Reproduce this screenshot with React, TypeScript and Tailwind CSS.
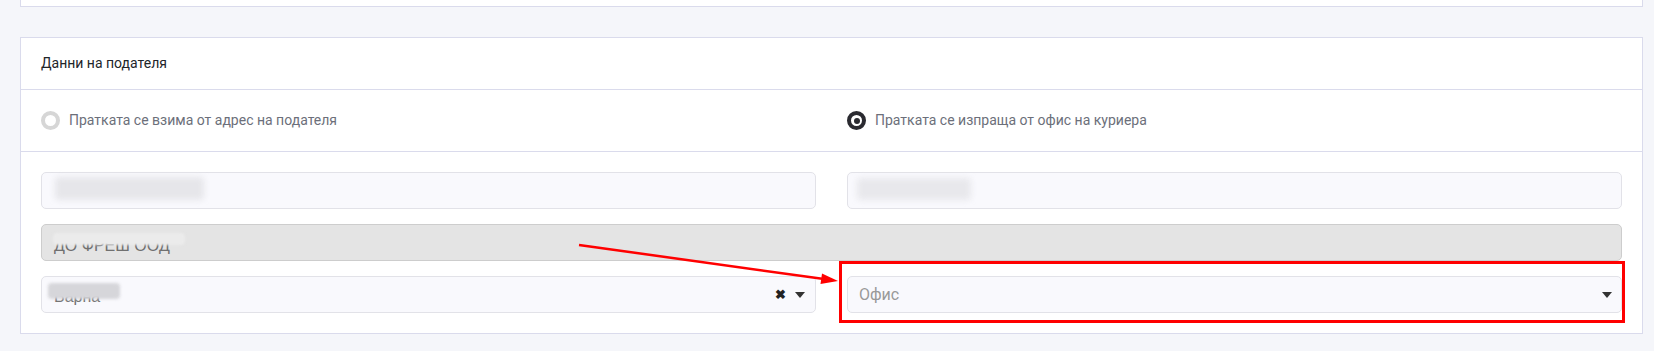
import React from "react";

function Smudge({ className }: { className: string }) {
  return <div className={`absolute rounded-sm ${className}`} />;
}

function Radio({ checked }: { checked?: boolean }) {
  if (checked) {
    return (
      <span className="flex h-[19px] w-[19px] items-center justify-center rounded-full border-[4px] border-[#2a2a30] bg-white">
        <span className="h-[6px] w-[6px] rounded-full bg-[#2a2a30]" />
      </span>
    );
  }
  return <span className="h-[19px] w-[19px] rounded-full border-[4px] border-[#d6d6d6] bg-white" />;
}

function Caret() {
  return (
    <svg width="10" height="6" viewBox="0 0 10 6">
      <path d="M0 0 L10 0 L5 6 Z" fill="#333" />
    </svg>
  );
}

export default function App() {
  return (
    <div
      className="relative h-[351px] w-full overflow-hidden bg-[#f5f6fa] pl-[20px] pr-[11px]"
      style={{ fontFamily: "Roboto, 'Liberation Sans', sans-serif" }}
    >
      {/* previous card, cut off at the top */}
      <div className="h-[7px] border-x border-b border-[#dadbec] bg-white" />

      {/* Данни на подателя */}
      <div className="mt-[30px] border border-[#dadbec] bg-white">
        <div className="flex h-[52px] items-center border-b border-[#dadbec] px-[20px] text-[14px] text-[#212529]">
          Данни на подателя
        </div>

        <div className="grid h-[62px] grid-cols-2 items-center gap-[31px] border-b border-[#dadbec] px-[20px] text-[14px] text-[#6c6f7a]">
          <label className="flex items-center gap-[9px]">
            <Radio />
            <span>Пратката се взима от адрес на подателя</span>
          </label>
          <label className="flex items-center gap-[9px]">
            <Radio checked />
            <span>Пратката се изпраща от офис на куриера</span>
          </label>
        </div>

        <div className="flex flex-col gap-[15px] px-[20px] py-[20px]">
          <div className="grid grid-cols-2 gap-[31px]">
            <div className="relative h-[37px] rounded-[5px] border border-[#e2e2e8] bg-[#f9f9fd]">
              <Smudge className="left-[13px] top-[4px] h-[23px] w-[149px] bg-[#e6e6ea] blur-[3px]" />
            </div>
            <div className="relative h-[37px] rounded-[5px] border border-[#e2e2e8] bg-[#f9f9fd]">
              <Smudge className="left-[9px] top-[5px] h-[22px] w-[114px] bg-[#e8e8ec] blur-[3px]" />
            </div>
          </div>

          <div className="relative flex h-[37px] items-center overflow-hidden rounded-[5px] border border-[#cdcdcd] bg-[#e4e4e4] pl-[12px] pt-[6px] font-['Liberation_Sans',sans-serif] text-[16px] text-[#707070]">
            ДО ФРЕШ ООД
            <Smudge className="left-[11px] top-[8px] h-[12px] w-[132px] bg-[#ebebeb] blur-[1px]" />
          </div>

          <div className="grid grid-cols-2 gap-[31px]">
            <div className="relative flex h-[37px] items-center overflow-hidden rounded-[5px] border border-[#e2e2e8] bg-[#f9f9fd] pl-[12px] pr-[10px] pt-[4px] text-[16px] text-[#707070]">
              <span className="flex-1 font-['Liberation_Sans',sans-serif]">Варна</span>
              <span className="-mt-[4px] mr-[9px] text-[13px] font-bold leading-none text-[#222]">✖</span>
              <span className="-mt-[4px] flex">
                <Caret />
              </span>
              <Smudge className="left-[6px] top-[6px] h-[16px] w-[72px] bg-[#d6d6da] blur-[1.5px]" />
            </div>
            <div className="relative">
              <div className="flex h-[37px] items-center rounded-[5px] border border-[#e2e2e8] bg-[#f9f9fd] pl-[11px] pr-[9px] text-[16px] text-[#999]">
                <span className="flex-1">Офис</span>
                <Caret />
              </div>
              <div className="pointer-events-none absolute -bottom-[10px] -left-[8px] -right-[3px] -top-[15px] border-[3px] border-[#ff0000]" />
            </div>
          </div>
        </div>
      </div>

      {/* annotation arrow */}
      <svg className="pointer-events-none absolute left-0 top-0" width="1654" height="351">
        <line x1="579" y1="245" x2="824" y2="279" stroke="#ff0000" strokeWidth="2.5" />
        <path d="M838 281 L822 273.5 L820.5 284 Z" fill="#ff0000" />
      </svg>
    </div>
  );
}
